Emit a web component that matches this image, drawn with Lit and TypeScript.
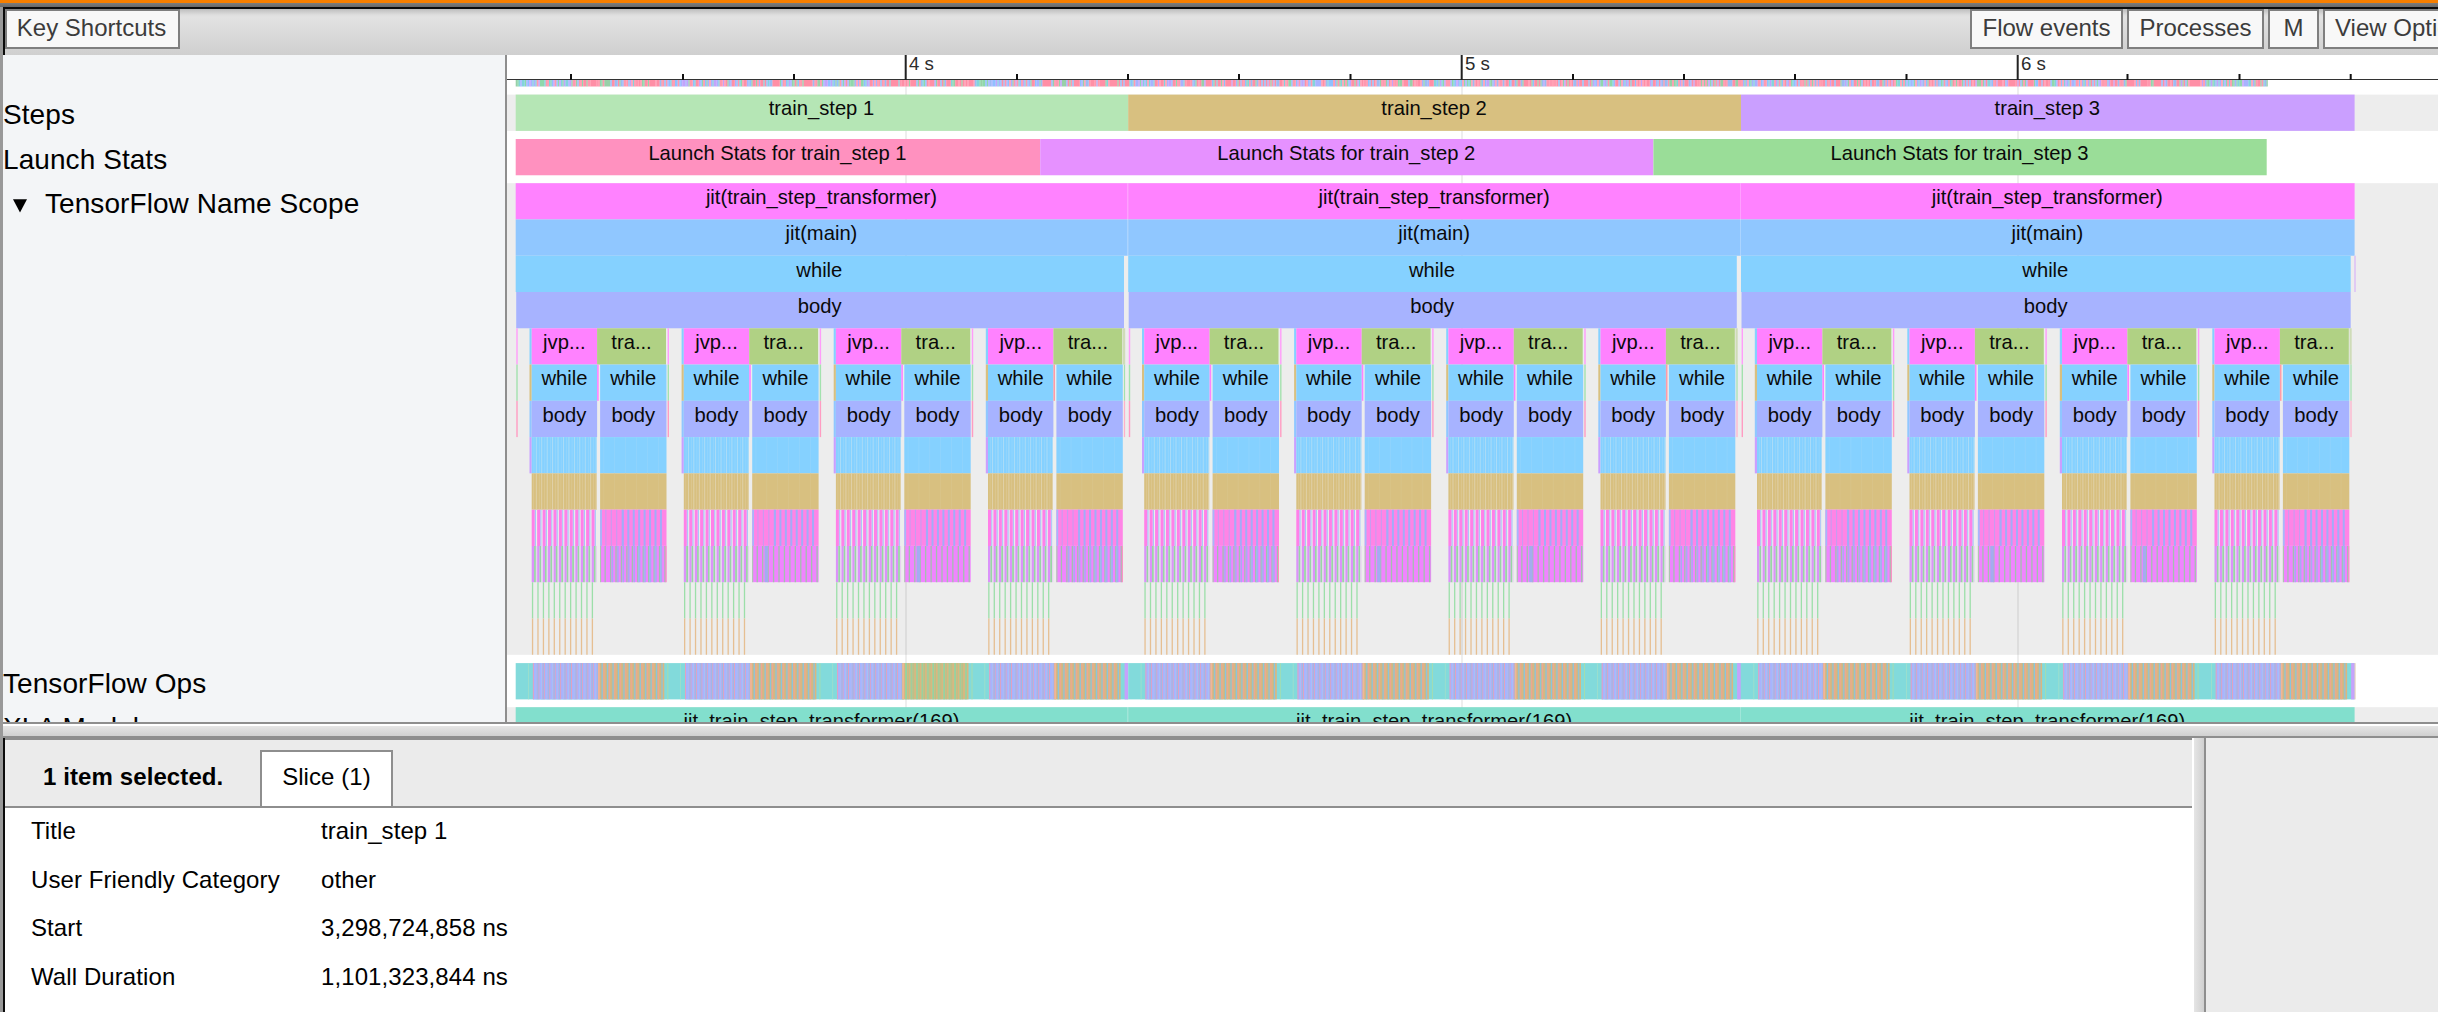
import { LitElement, html, css, svg } from "lit";
import { customElement } from "lit/decorators.js";

const MAGENTA = "#ff82ff";
const SKY = "#85d1ff";
const BLUE = "#90c7ff";
const PERIWINKLE = "#a7b3ff";
const TAN = "#d8c080";
const OLIVE = "#b0d184";
const TEAL = "#82dadb";
const PURPLE = "#ca9fff";

const STEPS = [515.7, 1128.2, 1741, 2354.6];
const LAUNCH = [515.7, 1040.2, 1653.4, 2266.7];
const GROUP_PITCH = [152.1, 152.1, 152.5];
const ROW = 36.27;
const SCOPE_TOP = 183.2;
const PERIOD = 5.44;
const rowY = (n: number) => SCOPE_TOP + n * ROW;

const rect = (x: number, y: number, w: number, h: number, fill: string) =>
  svg`<rect x=${x} y=${y} width=${w} height=${h} fill=${fill}></rect>`;

const label = (x: number, y: number, text: string) =>
  svg`<text class="slice" x=${x} y=${y}>${text}</text>`;

const bar = (a: number, b: number, y: number, fill: string, text = "") =>
  svg`${rect(a, y, b - a, ROW, fill)}${text ? label((a + b) / 2 - (b - a > 300 ? 0.5 : 0), y + 20.8, text) : ""}`;

/* Repeats a vertical stripe at a fixed period, drawn as one path. */
const stripes = (x: number, y: number, off: number, w: number, n: number, fill: string, every = 1) => {
  let d = "";
  for (let i = 0; i < n; i += every) {
    d += `M${(x + off + i * PERIOD).toFixed(2)} ${y.toFixed(2)}h${w}v${ROW}h-${w}z`;
  }
  return svg`<path d=${d} fill=${fill}></path>`;
};

const marker = (x: number, w = 1.4) => [
  rect(x, rowY(4), w, ROW, "#ff9cfa"),
  rect(x, rowY(5), w, ROW, "#a3e2ae"),
  rect(x, rowY(6), w, ROW, "#ff9cc2"),
];

const group = (x: number, k: number) => {
  const a = x + 65.4;
  const b = x + 68.4;
  const e = x + 134.8;
  const mixed = k === 0 || k === 3;
  return svg`
    ${rect(x - 2.2, rowY(4), 2.2, ROW, SKY)}
    ${rect(x - 2.2, rowY(5), 2.2, ROW, TAN)}
    ${rect(x - 2.2, rowY(6), 2.2, ROW, BLUE)}
    ${rect(x - 2.2, rowY(7), 2.2, ROW, PURPLE)}
    ${bar(x, a, rowY(4), MAGENTA, "jvp...")}
    ${bar(a, x + 134.3, rowY(4), OLIVE, "tra...")}
    ${bar(x, a, rowY(5), SKY, "while")}
    ${rect(a, rowY(5), 1.6, ROW, k === 3 ? "#ff9ca8" : MAGENTA)}
    ${bar(b, e, rowY(5), SKY, "while")}
    ${bar(x, a, rowY(6), PERIWINKLE, "body")}
    ${bar(b, e, rowY(6), PERIWINKLE, "body")}
    ${bar(x, a - 0.4, rowY(7), SKY)}
    ${stripes(x, rowY(7), 4.2, 0.8, 12, "#b3def5")}
    ${stripes(x, rowY(7), 2, 0.5, 12, "#a0d8fa")}
    ${bar(b, e, rowY(7), SKY)}
    ${stripes(b, rowY(7), 3.5, 0.5, 12, "#98d5fb", 2)}
    ${bar(x, a - 0.4, rowY(8), TAN)}
    ${stripes(x, rowY(8), 4.2, 0.8, 12, "#e2d4b0")}
    ${stripes(x, rowY(8), 1.8, 0.5, 12, "#dfcc9c")}
    ${bar(b, e, rowY(8), TAN)}
    ${stripes(b, rowY(8), 3.5, 0.5, 12, "#dac68d", 2)}
    ${stripes(x, rowY(9), 0, 3, 12, "#ff80e8")}
    ${stripes(x, rowY(9), 3, 0.5, 12, "#d8a0f5")}
    ${stripes(x, rowY(9), 3.4, 0.9, 12, "#a5c4f8")}
    ${bar(b, e, rowY(9), "#ff84e6")}
    ${rect(b, rowY(9), 1.8, ROW, "#a5b8fa")}
    ${stripes(b, rowY(9), 5.2, 1.1, 4, "#c89cf0")}
    ${stripes(b + 4 * PERIOD, rowY(9), 0, 2, 8, "#a2acf8")}
    ${stripes(x, rowY(10), 0, 2.4, 12, "#db92fa")}
    ${stripes(x, rowY(10), 2.4, 1.8, 12, "#98d6a4")}
    ${stripes(x, rowY(10), 4.2, 1.2, 12, "#e6d0f0")}
    ${bar(b, e, rowY(10), "#f084ff")}
    ${rect(b, rowY(10), 1, ROW, "#a5cfa8")}
    ${stripes(b, rowY(10), 4.4, 1.3, 12, "#a3c0ae")}
    ${mixed ? stripes(b + 10, rowY(10), 1.6, 1.5, 10, "#a8acf2") : rect(b + 12.4, rowY(10), 3.4, ROW, "#a3acf0")}
    ${mixed ? stripes(b + 35, rowY(10), 3.1, 0.8, 5, "#8fc8e8") : ""}
    ${mixed ? rect(e - 1, rowY(10), 1, ROW, "#ff90b8") : ""}
    ${stripes(x, rowY(11), 0.2, 1.3, 12, "#9cdfa9")}
    ${stripes(x, rowY(12), 0.2, 1.3, 12, "#e6bf92")}
    ${k < 3 ? marker(x + 135.9) : svg`${rect(x + 135, rowY(4), 2.2, ROW, "#cfdcb8")}${rect(x + 135.9, rowY(5), 1.2, ROW, "#a3e2ae")}${rect(x + 135.9, rowY(6), 1.2, ROW, "#ffb0cb")}`}
  `;
};

const opsGroup = (x: number, k: number, s: number) => {
  const y = 663.1;
  const t = x + 66.4;
  const green = s === 0 && k === 2;
  return svg`
    ${rect(x - 3.5, y, 0.7, ROW, "#a5e0c8")}
    ${rect(x + 1.2, y, 65.2, ROW, PERIWINKLE)}
    ${stripes(x + 1.2, y, 0, 1, 12, "#e2a2be")}
    ${stripes(x + 1.2, y, 2.8, 0.8, 12, "#a4c6f6")}
    ${stripes(x + 1.2, y, 3.7, 0.8, 12, "#c2a9e0")}
    ${stripes(x + 1.2, y, 4.6, 0.8, 12, "#96bde2")}
    ${rect(t, y, 66.2, ROW, "#dab680")}
    ${stripes(t, y, 0, 1, 12, green ? "#b2c58a" : "#efa594")}
    ${stripes(t, y, 2.8, 0.8, 12, green ? "#98d5a0" : "#b4bd98")}
    ${stripes(t, y, 3.5, 1.2, 12, green ? "#95d2a2" : "#8cc4dc")}
    ${rect(t, y, 1.6, ROW, "#f0b598")}
    ${k === 3 ? rect(x + 136.6, y, 3.6, ROW, "#c5a2fb") : rect(x + 135.6, y, 1, ROW, "#a5dcb0")}
  `;
};

/* Condensed activity strip beneath the ruler. */
const overview = () => {
  const cool = ["#90c0ff", "#8fd8ac", "#c2a4fb", "#82d4dc", "#a7b3ff", "#ff9ab0"];
  const warm = ["#ff8fa6", "#ff8fa6", "#ff98b0", "#ff8fa6", "#9cbcf2", "#98d0a8"];
  const paths: Record<string, string> = {};
  let seed = 7;
  const next = () => (seed = (seed * 16807) % 2147483647) / 2147483647;
  for (let x = 515.7; x < 2266.5; x += 1.5) {
    const phase = (x - 515.7) % 153.2;
    const pool = next() < (phase < 26 ? 0.05 : phase < 56 ? 0.3 : 0.8) ? warm : cool;
    const c = pool[Math.floor(next() * pool.length)];
    paths[c] = (paths[c] ?? "") + `M${x.toFixed(1)} 80h1.6v6.6h-1.6z`;
  }
  return Object.entries(paths).map(([c, d]) => svg`<path d=${d} fill=${c}></path>`);
};

@customElement("trace-timeline")
class TraceTimeline extends LitElement {
  static styles = css`
    :host { display: block; width: 1931px; height: 667px; background: #fff; }
    svg { display: block; }
    text { font-family: "Liberation Sans", Arial, sans-serif; fill: #0a0a0a; }
    .slice { font-size: 20.2px; text-anchor: middle; }
    .tick { font-size: 18.7px; fill: #2c2c2c; }
  `;

  render() {
    const names = ["#b5e6b5", TAN, PURPLE];
    const launch = ["#ff91bf", "#e691ff", "#9add98"];
    const minor = [571, 683, 794, 1017, 1128, 1239, 1350.5, 1573, 1684, 1795, 1906.5, 2127.5, 2239.5, 2350.7];
    const major = [[905.7, "4 s"], [1461.7, "5 s"], [2017.7, "6 s"]] as [number, string][];
    return html`
      <svg width="1931" height="667" viewBox="507 55 1931 667">
        ${rect(507, 94.6, 1931, 36.3, "#ededed")}
        ${rect(507, SCOPE_TOP, 1931, 471.6, "#ededed")}
        ${rect(507, 707.2, 1931, 20, "#ededed")}
        ${major.map(([x]) => rect(x - 0.7, 80, 2, 642, "rgba(0,0,0,0.065)"))}
        ${overview()}
        ${rect(507, 79, 1931, 1, "#333")}
        ${minor.map((x) => rect(x - 1, 74, 2, 6, "#111"))}
        ${major.map(([x, t]) => svg`${rect(x - 1, 55, 2, 25, "#222")}<text class="tick" x=${x + 3.2} y="70">${t}</text>`)}
        ${[0, 1, 2].map((i) => bar(STEPS[i], STEPS[i + 1], 94.6, names[i], `train_step ${i + 1}`))}
        ${[0, 1, 2].map((i) => bar(LAUNCH[i], LAUNCH[i + 1], 139, launch[i], `Launch Stats for train_step ${i + 1}`))}
        ${[0, 1, 2].map((i) => {
          const a = STEPS[i];
          const b = STEPS[i + 1];
          const end = i === 2 ? 2350.7 : b - 4.2;
          return svg`
            ${bar(a, b, rowY(0), MAGENTA, "jit(train_step_transformer)")}
            ${bar(a, b, rowY(1), BLUE, "jit(main)")}
            ${i < 2 ? rect(b - 0.9, rowY(0), 0.7, ROW * 2, "rgba(255,255,255,0.35)") : ""}
            ${bar(a, end, rowY(2), SKY, "while")}
            ${bar(a + 0.5, end, rowY(3), PERIWINKLE, "body")}
            ${marker(a + 0.6)}
            ${[0, 1, 2, 3].map((k) => group(a + 16 + k * GROUP_PITCH[i], k))}
            ${rect(a, 663.1, b - a, ROW, TEAL)}
            ${[0, 1, 2, 3].map((k) => opsGroup(a + 16 + k * GROUP_PITCH[i], k, i))}
            ${bar(a, b, 707.2, "#82dfcd", "jit_train_step_transformer(169)")}
            ${i < 2 ? rect(b - 0.9, 707, 0.7, 15, "rgba(255,255,255,0.35)") : ""}
          `;
        })}
        ${rect(2354.2, rowY(2), 1.6, ROW, "#dcc2f4")}
        ${rect(2354.6, 663.1, 1, ROW, "#e3cdb8")}
      </svg>
    `;
  }
}

@customElement("app-root")
class AppRoot extends LitElement {
  static styles = css`
    :host {
      display: flex; flex-direction: column; width: 2438px; height: 1012px; overflow: hidden;
      font-family: "Liberation Sans", Arial, sans-serif; color: #000; background: #999;
      white-space: nowrap; box-sizing: border-box;
    }
    * { box-sizing: border-box; }
    .accent { flex: none; height: 3px; background: #f77f00; }
    .edge { flex: none; height: 4px; background: linear-gradient(#7e7e7e, #686868); }
    .frame { flex: 1; min-height: 0; margin-left: 3px; display: flex; flex-direction: column; overflow: hidden; }
    .toolbar {
      flex: none; height: 48px; border-top: 2px solid #0b0b0b; border-left: 2px solid #0b0b0b;
      display: flex; align-items: flex-start; justify-content: space-between;
      background: linear-gradient(#bdbdbd, #dedede 6px, #e2e2e2 8px, #cfcfcf);
    }
    .right { flex: none; display: flex; gap: 4px; width: 468px; height: 40px; overflow: hidden; }
    .btn {
      flex: none; height: 40px; border: 2px solid #7f7f7f; background: #f8f8f8; color: #3c3c3c;
      font-size: 24px; line-height: 32px; text-align: center; padding-top: 1px;
    }
    .shortcuts { width: 175px; padding-right: 2px; }
    .flow { width: 153px; }
    .processes { width: 137px; }
    .m { width: 51px; }
    .view { width: 170px; text-align: left; padding-left: 10px; }
    .trace { flex: none; height: 669px; display: flex; border-bottom: 2px solid #8e8e8e; overflow: hidden; }
    .labels {
      flex: none; width: 504px; background: #f3f5f7; border-right: 2px solid #8e8e8e;
      padding-top: 40px; display: flex; flex-direction: column; gap: 8.2px; font-size: 28px;
      letter-spacing: 0.07px; overflow: hidden;
    }
    .name { flex: none; height: 36.2px; line-height: 40px; }
    .low { line-height: 42px; }
    .scope { height: 471.4px; display: flex; }
    .arrow { width: 42px; padding-left: 9px; padding-top: 15px; }
    .arrow svg { display: block; }
    .splitter { flex: none; height: 14px; border-top: 2px solid #fff; border-bottom: 2px solid #8e8e8e; background: linear-gradient(#e5e5e5, #d0d0d0); }
    .bottom { flex: 1; min-height: 0; display: flex; background: #ebebeb; }
    .analysis { flex: none; width: 2189px; border-left: 2px solid #0b0b0b; background: #fff; display: flex; flex-direction: column; }
    .tabs {
      flex: none; height: 70px; background: #ebebeb; border-top: 2px solid #8e8e8e; border-bottom: 2px solid #8e8e8e;
      display: flex; align-items: flex-end; font-size: 24px;
    }
    .count { width: 255px; padding-left: 38px; font-weight: bold; line-height: 54px; height: 56px; letter-spacing: 0.1px; }
    .tab {
      width: 133px; height: 56px; border: 2px solid #8e8e8e; border-bottom: 0; background: #fff;
      line-height: 50px; text-align: center; letter-spacing: 0.08px;
    }
    .vsplit { flex: none; width: 14px; border-left: 2px solid #fff; border-right: 2px solid #8e8e8e; background: linear-gradient(90deg, #e5e5e5, #d0d0d0); }
    .details {
      display: grid; grid-template-columns: 290px auto; grid-auto-rows: 48.6px; padding-left: 26px;
      font-size: 24px; line-height: 46px; letter-spacing: 0.09px;
    }
  `;

  private details = [
    ["Title", "train_step 1"],
    ["User Friendly Category", "other"],
    ["Start", "3,298,724,858 ns"],
    ["Wall Duration", "1,101,323,844 ns"],
  ];

  render() {
    return html`
      <div class="accent"></div>
      <div class="edge"></div>
      <div class="frame">
        <div class="toolbar">
          <div class="btn shortcuts">Key Shortcuts</div>
          <div class="right">
            <div class="btn flow">Flow events</div>
            <div class="btn processes">Processes</div>
            <div class="btn m">M</div>
            <div class="btn view">View Options</div>
          </div>
        </div>
        <div class="trace">
          <div class="labels">
            <div class="name">Steps</div>
            <div class="name low">Launch Stats</div>
            <div class="name scope">
              <span class="arrow"><svg width="16" height="14" viewBox="0 0 16 14"><path d="M1 0.3H15L8 13.6Z"></path></svg></span>
              <span>TensorFlow Name Scope</span>
            </div>
            <div class="name low">TensorFlow Ops</div>
            <div class="name">XLA Modules</div>
          </div>
          <trace-timeline></trace-timeline>
        </div>
        <div class="splitter"></div>
        <div class="bottom">
          <div class="analysis">
            <div class="tabs">
              <div class="count">1 item selected.</div>
              <div class="tab">Slice (1)</div>
            </div>
            <div class="details">
              ${this.details.map(([k, v]) => html`<span>${k}</span><span>${v}</span>`)}
            </div>
          </div>
          <div class="vsplit"></div>
        </div>
      </div>
    `;
  }
}
